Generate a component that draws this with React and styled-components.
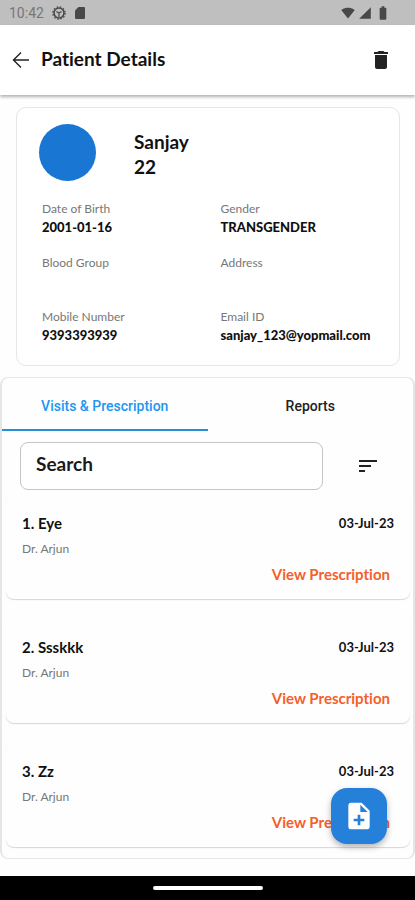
import { useState } from "react";
import styled, { createGlobalStyle } from "styled-components";
import {
    MdBatteryFull,
    MdDelete,
    MdNoteAdd,
    MdSignalCellular4Bar,
    MdSignalWifi4Bar,
    MdSort,
} from "react-icons/md";

const patient = {
    name: "Sanjay",
    age: 22,
    details: [
        { label: "Date of Birth", value: "2001-01-16" },
        { label: "Gender", value: "TRANSGENDER" },
        { label: "Blood Group", value: "" },
        { label: "Address", value: "" },
        { label: "Mobile Number", value: "9393393939" },
        { label: "Email ID", value: "sanjay_123@yopmail.com" },
    ],
};

const visits = [
    { id: 1, title: "Eye", doctor: "Dr. Arjun", date: "03-Jul-23" },
    { id: 2, title: "Ssskkk", doctor: "Dr. Arjun", date: "03-Jul-23" },
    { id: 3, title: "Zz", doctor: "Dr. Arjun", date: "03-Jul-23" },
];

const tabs = ["Visits & Prescription", "Reports"];

function StatusBar() {
    return (
        <Status>
            <StatusGroup>
                <span>10:42</span>
                <svg width="14" height="14" viewBox="0 0 14 14" fill="none" stroke="currentColor">
                    <circle cx="7" cy="7" r="5" strokeWidth="1.6" />
                    <circle cx="7" cy="7" r="6.2" strokeWidth="1.2" strokeDasharray="1.6 1.65" />
                    <path d="M7 7v4M7 7L4.4 5.4M7 7l2.6-1.6" strokeWidth="1.2" />
                </svg>
                <svg width="12" height="14" viewBox="0 0 12 14" fill="currentColor">
                    <path d="M4.5 1H10a1 1 0 0 1 1 1v10a1 1 0 0 1-1 1H2a1 1 0 0 1-1-1V4.5z" />
                </svg>
            </StatusGroup>
            <StatusIcons>
                <MdSignalWifi4Bar size={14} />
                <MdSignalCellular4Bar size={14} />
                <MdBatteryFull size={16} />
            </StatusIcons>
        </Status>
    );
}

function PatientCard({ data }) {
    return (
        <Card>
            <Profile>
                <Avatar />
                <ProfileText>
                    <Name>{data.name}</Name>
                    <Name as="p">{data.age}</Name>
                </ProfileText>
            </Profile>
            <Details>
                {data.details.map((item) => (
                    <Detail key={item.label}>
                        <dt>{item.label}</dt>
                        <dd>{item.value}</dd>
                    </Detail>
                ))}
            </Details>
        </Card>
    );
}

function Visit({ data }) {
    return (
        <VisitCard>
            <VisitTop>
                <VisitTitle>
                    {data.id}. {data.title}
                </VisitTitle>
                <VisitDate>{data.date}</VisitDate>
            </VisitTop>
            <Doctor>{data.doctor}</Doctor>
            <ViewLink href="#prescription">View Prescription</ViewLink>
        </VisitCard>
    );
}

export default function App() {
    const [active, setActive] = useState(0);
    const [search, setSearch] = useState("");

    return (
        <Page>
            <GlobalStyle />
            <StatusBar />
            <Header>
                <IconButton aria-label="Back">
                    <svg width="18" height="18" viewBox="0 0 18 18" fill="none" stroke="currentColor" strokeWidth="1.4">
                        <path d="M17 9H1.5M9 1.5L1.5 9L9 16.5" />
                    </svg>
                </IconButton>
                <Title>Patient Details</Title>
                <IconButton aria-label="Delete patient">
                    <MdDelete size={24} />
                </IconButton>
            </Header>
            <PatientCard data={patient} />
            <Panel>
                <Tabs role="tablist">
                    {tabs.map((tab, i) => (
                        <Tab key={tab} role="tab" aria-selected={active === i} $active={active === i} onClick={() => setActive(i)}>
                            {tab}
                        </Tab>
                    ))}
                </Tabs>
                <SearchRow>
                    <SearchInput
                        type="text"
                        aria-label="Search"
                        placeholder="Search"
                        value={search}
                        onChange={(e) => setSearch(e.target.value)}
                    />
                    <IconButton aria-label="Sort">
                        <MdSort size={24} />
                    </IconButton>
                </SearchRow>
                <VisitList>
                    {visits.map((visit) => (
                        <Visit key={visit.id} data={visit} />
                    ))}
                </VisitList>
            </Panel>
            <AddButton aria-label="Add visit">
                <MdNoteAdd size={32} />
            </AddButton>
            <NavBar>
                <NavHandle />
            </NavBar>
        </Page>
    );
}

const GlobalStyle = createGlobalStyle`
    * {
        box-sizing: border-box;
    }
    body {
        margin: 0;
        background-color: #fefefe;
        color: #111;
        font-family: Lato, "Liberation Sans", sans-serif;
        font-variant-ligatures: none;
    }
    h1, h2, h3, p, dl, dd, ul {
        margin: 0;
        padding: 0;
    }
`;

const Page = styled.div`
    display: flex;
    flex-direction: column;
    min-height: 100vh;
`;

const Status = styled.div`
    display: flex;
    align-items: center;
    justify-content: space-between;
    height: 25px;
    padding: 0 24px 0 9px;
    background-color: #bfbfbf;
    color: #484848;
`;

const StatusGroup = styled.div`
    display: flex;
    align-items: center;
    gap: 8px;
    font-family: Roboto, sans-serif;
    font-size: 14px;

    span {
        color: #777;
    }
`;

const StatusIcons = styled.div`
    display: flex;
    align-items: center;
    gap: 3px;
`;

const Header = styled.header`
    display: flex;
    align-items: center;
    height: 70px;
    padding: 0 22px 0 12px;
    background-color: #fff;
    box-shadow: 0 2px 3px rgba(0, 0, 0, 0.3);
`;

const Button = styled.button`
    display: flex;
    align-items: center;
    justify-content: center;
    padding: 0;
    border: 0;
    background-color: transparent;
    cursor: pointer;
`;

const IconButton = styled(Button)`
    color: #222;
`;

const Title = styled.h1`
    flex: 1;
    margin-left: 11px;
    padding-bottom: 4px;
    font-size: 19px;
    font-weight: 700;
`;

const Card = styled.section`
    margin: 12px 15px 11px 16px;
    padding: 16px 0 20px 22px;
    border: 1px solid #e6e6e6;
    border-radius: 10px;
    background-color: #fff;
`;

const Profile = styled.div`
    display: flex;
    gap: 38px;
`;

const ProfileText = styled.div`
    padding-top: 5px;
`;

const Avatar = styled.div`
    width: 57px;
    height: 57px;
    border-radius: 50%;
    background-color: #1976d2;
`;

const Name = styled.h2`
    font-size: 19px;
    font-weight: 700;
    line-height: 25px;
`;

const Details = styled.dl`
    display: grid;
    grid-template-columns: 1fr 1fr;
    margin: 18px 0 0 3px;
    row-gap: 16px;
`;

const Detail = styled.div`
    dt {
        color: #777;
        font-size: 12px;
        line-height: 19px;
    }
    dd {
        min-height: 19px;
        font-size: 13px;
        font-weight: 900;
        line-height: 19px;
    }
`;

const Panel = styled.section`
    padding-bottom: 11px;
    border: 1px solid #e6e6e6;
    border-width: 1px 2px;
    border-radius: 8px;
`;

const Tabs = styled.div`
    display: grid;
    grid-template-columns: 1fr 1fr;
`;

const Tab = styled(Button)`
    height: 53px;
    padding-top: 4px;
    border-bottom: 2px solid ${props => props.$active ? "#2490d8" : "transparent"};
    color: ${props => props.$active ? "#2196f3" : "#222"};
    font-family: Roboto, sans-serif;
    font-size: 14px;
    font-weight: 500;
`;

const SearchRow = styled.div`
    display: flex;
    align-items: center;
    gap: 33px;
    padding: 11px 33px 0 18px;
`;

const SearchInput = styled.input`
    flex: 1;
    min-width: 0;
    height: 48px;
    padding: 0 15px 5px;
    border: 1px solid #c4c4c4;
    border-radius: 8px;
    background-color: #fff;
    color: #111;
    font-family: inherit;
    font-size: 19px;
    font-weight: 700;
    outline: 0;

    &::placeholder {
        color: #1a1a1a;
        opacity: 1;
    }
`;

const VisitList = styled.ul`
    display: flex;
    flex-direction: column;
    gap: 16px;
    padding: 1px 3px 0 4px;
    list-style: none;
`;

const VisitCard = styled.li`
    display: flex;
    flex-direction: column;
    padding: 22px 16px 15px;
    border-radius: 8px;
    box-shadow: 0 1px 1px rgba(0, 0, 0, 0.16);
`;

const VisitTop = styled.div`
    display: flex;
    align-items: center;
    justify-content: space-between;
    line-height: 20px;
`;

const VisitTitle = styled.h3`
    font-size: 15px;
    font-weight: 700;
`;

const VisitDate = styled.time`
    font-size: 13px;
    font-weight: 700;
`;

const Doctor = styled.p`
    margin-top: 6px;
    color: #777;
    font-size: 12px;
    line-height: 19px;
`;

const ViewLink = styled.a`
    align-self: flex-end;
    margin: 7px 4px 0 0;
    color: #f4602a;
    font-size: 15px;
    font-weight: 700;
    line-height: 19px;
    text-decoration: none;
`;

const AddButton = styled(Button)`
    position: fixed;
    right: 28px;
    bottom: 56px;
    width: 56px;
    height: 56px;
    border-radius: 16px;
    background-color: #2580da;
    color: #fff;
    box-shadow: 0 3px 6px rgba(0, 0, 0, 0.3);
`;

const NavBar = styled.div`
    display: flex;
    align-items: center;
    justify-content: center;
    height: 24px;
    margin-top: auto;
    background-color: #000;
`;

const NavHandle = styled.div`
    width: 110px;
    height: 4px;
    border-radius: 2px;
    background-color: #fff;
`;
